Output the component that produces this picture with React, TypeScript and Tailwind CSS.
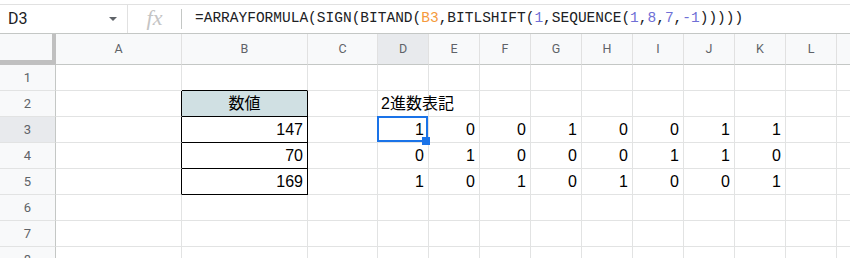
import React from "react";

const COLS = [
  { k: "A", w: "w-[126px]" },
  { k: "B", w: "w-[126px]" },
  { k: "C", w: "w-[70px]" },
  { k: "D", w: "w-[51px]" },
  { k: "E", w: "w-[51px]" },
  { k: "F", w: "w-[51px]" },
  { k: "G", w: "w-[51px]" },
  { k: "H", w: "w-[51px]" },
  { k: "I", w: "w-[51px]" },
  { k: "J", w: "w-[51px]" },
  { k: "K", w: "w-[51px]" },
  { k: "L", w: "w-[51px]" },
  { k: "M", w: "w-[51px]" },
];

const bits: Record<number, number[]> = {
  3: [1, 0, 0, 1, 0, 0, 1, 1],
  4: [0, 1, 0, 0, 0, 1, 1, 0],
  5: [1, 0, 1, 0, 1, 0, 0, 1],
};
const nums: Record<number, string> = { 3: "147", 4: "70", 5: "169" };

function Cell({
  w,
  className = "",
  children,
}: {
  w: string;
  className?: string;
  children?: React.ReactNode;
}) {
  return (
    <div
      className={`${w} shrink-0 h-full border-r border-b border-[#e2e3e3] flex items-center relative ${className}`}
    >
      {children}
    </div>
  );
}

function DataRow({ r }: { r: number }) {
  const inBox = r >= 2 && r <= 5;
  return (
    <div className="flex h-[26px]">
      <div
        className={`w-[56px] shrink-0 h-full border-r border-r-[#c4c7c5] border-b border-b-[#e2e3e3] flex items-center justify-center text-[13px] text-[#5f6368] ${
          r === 3 ? "bg-[#e8eaed]" : "bg-[#f8f9fa]"
        }`}
        style={{ fontFamily: "Roboto, 'Liberation Sans', sans-serif" }}
      >
        {r}
      </div>
      {COLS.map((c, i) => {
        let cls = "";
        let content: React.ReactNode = null;
        if (c.k === "A" && inBox) cls = "!border-r-black";
        if (c.k === "B" && r === 1) cls = "!border-b-black";
        if (c.k === "B" && inBox) {
          cls = "!border-r-black !border-b-black";
          if (r === 2) {
            cls += " bg-[#d0e0e3] justify-center";
            content = "数値";
          } else {
            cls += " justify-end pr-[4px]";
            content = nums[r];
          }
        }
        if (c.k === "D" && r === 2) {
          content = (
            <span className="absolute left-[3px] whitespace-nowrap z-10">2進数表記</span>
          );
        }
        if (i >= 3 && i <= 10 && r >= 3 && r <= 5) {
          cls += " justify-end pr-[4px]";
          content = bits[r][i - 3];
        }
        return (
          <Cell key={c.k} w={c.w} className={cls}>
            {content}
            {c.k === "D" && r === 3 && (
              <>
                <div className="absolute left-[-1px] top-[-1px] right-0 bottom-0 border-2 border-[#1a73e8] z-20" />
                <div className="absolute right-[-2px] bottom-[-3px] w-[8px] h-[8px] bg-[#1a73e8] z-30" />
              </>
            )}
          </Cell>
        );
      })}
    </div>
  );
}

export default function App() {
  const num = "text-[#6f6fd6]";
  return (
    <div
      className="w-[850px] h-[258px] overflow-hidden bg-white text-black"
      style={{ fontFamily: "'Liberation Sans', Arial, 'Noto Sans CJK JP', sans-serif" }}
    >
      {/* formula bar */}
      <div className="mt-[4px] h-[30px] border-t border-[#e1e1e1] border-b border-b-[#c4c7c5] flex items-center">
        <div
          className="w-[128px] h-full shrink-0 border-r border-[#e1e1e1] flex items-center justify-between pl-[8px] pr-[10px] text-[16px] text-[#202124]"
          style={{ fontFamily: "Roboto, 'Liberation Sans', sans-serif" }}
        >
          <span>D3</span>
          <svg width="8" height="4" viewBox="0 0 8 4">
            <path d="M0 0 L8 0 L4 4 Z" fill="#5f6368" />
          </svg>
        </div>
        <div className="w-[54px] h-full shrink-0 flex items-center">
          <div className="flex-1 flex justify-center">
            <span
              className="italic text-[22px] text-[#c4c4c4] leading-none -mt-[2px]"
              style={{ fontFamily: "'Liberation Serif', serif" }}
            >
              fx
            </span>
          </div>
          <div className="w-px h-[20px] bg-[#c4c7c5]" />
        </div>
        <div
          className="pl-[13px] text-[14.5px] text-[#202124] whitespace-nowrap"
          style={{ fontFamily: "'Liberation Mono', 'DejaVu Sans Mono', monospace" }}
        >
          =ARRAYFORMULA(SIGN(BITAND(<span className="text-[#f59a3c]">B3</span>,BITLSHIFT(
          <span className={num}>1</span>,SEQUENCE(<span className={num}>1</span>,
          <span className={num}>8</span>,<span className={num}>7</span>,
          <span className={num}>-1</span>)))))
        </div>
      </div>
      {/* column header */}
      <div
        className="flex h-[31px] text-[12.5px] text-[#5f6368]"
        style={{ fontFamily: "Roboto, 'Liberation Sans', sans-serif" }}
      >
        <div className="w-[56px] shrink-0 h-full bg-[#f8f9fa] border-r-[4px] border-b-[5px] border-[#c0c0c0]" />
        {COLS.map((c) => (
          <div
            key={c.k}
            className={`${c.w} shrink-0 h-full border-r border-[#e1e1e1] border-b border-b-[#c4c7c5] flex items-center justify-center ${
              c.k === "D" ? "bg-[#e8eaed]" : "bg-[#f8f9fa]"
            }`}
          >
            {c.k}
          </div>
        ))}
      </div>
      {[1, 2, 3, 4, 5, 6, 7, 8].map((r) => (
        <DataRow key={r} r={r} />
      ))}
      <div className="text-[16px]" />
    </div>
  );
}
